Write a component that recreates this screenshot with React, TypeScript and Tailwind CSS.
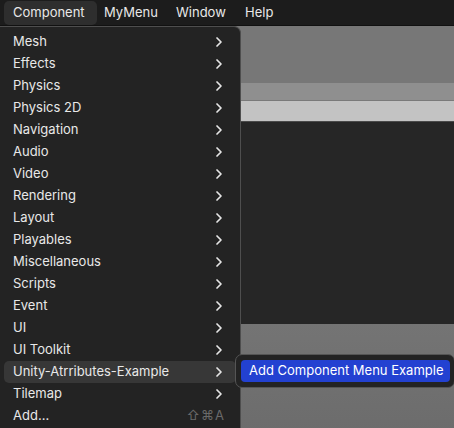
import React from "react";

const items = [
  "Mesh",
  "Effects",
  "Physics",
  "Physics 2D",
  "Navigation",
  "Audio",
  "Video",
  "Rendering",
  "Layout",
  "Playables",
  "Miscellaneous",
  "Scripts",
  "Event",
  "UI",
  "UI Toolkit",
  "Unity-Atrributes-Example",
  "Tilemap",
];

function Chevron() {
  return (
    <svg width="8" height="12" viewBox="0 0 8 12" className="shrink-0">
      <path d="M2 2 L6 6 L2 10" fill="none" stroke="#e6e6e6" strokeWidth="1.7" strokeLinecap="round" strokeLinejoin="round" />
    </svg>
  );
}

export default function App() {
  return (
    <div
      className="relative w-[454px] h-[428px] overflow-hidden bg-[#262626] text-[13px] text-[#e8e8e8]"
      style={{ fontFamily: "Inter, 'Liberation Sans', sans-serif" }}
    >
      {/* Menu bar */}
      <div className="flex items-center h-[25px] bg-[#1c1c1c] pl-[4px]">
        <div className="h-[24px] w-[93px] pl-[9px] flex items-center rounded-[5px] bg-[#2e2e2e]">Component</div>
        <div className="w-[72px] ml-[7px]">MyMenu</div>
        <div className="w-[69px]">Window</div>
        <div>Help</div>
      </div>

      {/* Editor background */}
      <div className="flex flex-col">
        <div className="h-[1px] bg-[#111]" />
        <div className="h-[57px] bg-[#777777]" />
        <div className="h-[18px] bg-[#8f8f8f] border-b border-[#7a7a7a]" />
        <div className="h-[21px] bg-[#c3c3c3] border-b border-[#4a4a4a]" />
        <div className="h-[202px] bg-[#262626]" />
        <div className="h-[110px] bg-gradient-to-b from-[#747474] to-[#6c6c6c]" />
      </div>

      {/* Dropdown */}
      <div className="absolute left-0 top-[26px] w-[241px] h-[420px] bg-[#232323] border-r border-t border-[#4e4e4e] rounded-tr-[7px] pt-[4px] px-[4px] flex flex-col">
        {items.map((label) => (
          <div
            key={label}
            className={
              "h-[22px] flex items-center justify-between pl-[9px] pr-[13px] rounded-[5px] " +
              (label === "Unity-Atrributes-Example" ? "bg-[#373737]" : "")
            }
          >
            <span>{label}</span>
            <Chevron />
          </div>
        ))}
        <div className="h-[22px] flex items-center justify-between pl-[9px] pr-[11px]">
          <span>Add...</span>
          <span className="text-[#6a6a6a] tracking-[1px]">⇧⌘A</span>
        </div>
      </div>

      {/* Submenu */}
      <div className="absolute left-[235px] top-[354px] w-[220px] h-[34px] bg-[#232323] border border-[#555] rounded-[7px] p-[5px]">
        <div className="h-[22px] w-[209px] flex items-center pl-[8px] rounded-[4px] bg-[#2341d1] text-white">
          Add Component Menu Example
        </div>
      </div>
    </div>
  );
}
